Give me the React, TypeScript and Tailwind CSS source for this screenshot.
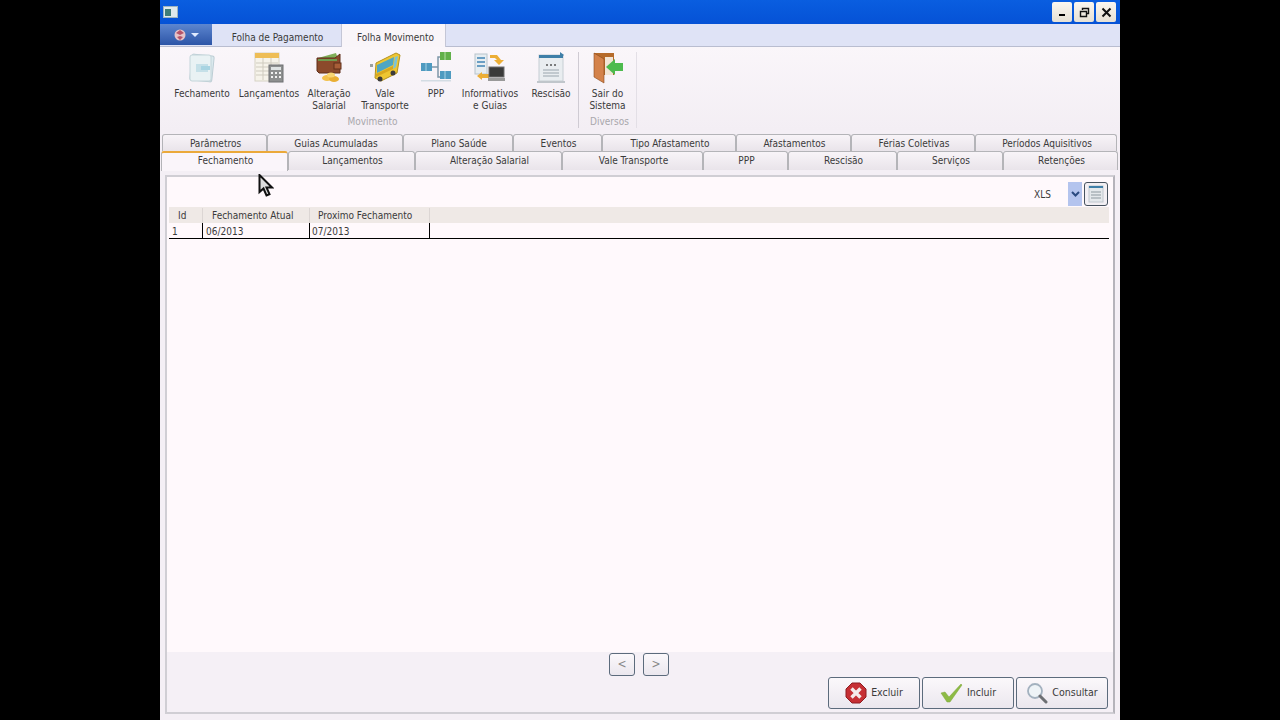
const FONT = { fontFamily: '"DejaVu Sans Condensed", "Noto Sans", sans-serif' };

const topTabs = [
  { label: 'Parâmetros', w: 'w-[105px]' },
  { label: 'Guias Acumuladas', w: 'w-[136px]' },
  { label: 'Plano Saúde', w: 'w-[110px]' },
  { label: 'Eventos', w: 'w-[89px]' },
  { label: 'Tipo Afastamento', w: 'w-[134px]' },
  { label: 'Afastamentos', w: 'w-[115px]' },
  { label: 'Férias Coletivas', w: 'w-[124px]' },
  { label: 'Períodos Aquisitivos', w: 'w-[142px]' },
];

const bottomTabs = [
  { label: 'Lançamentos', w: 'w-[127px] pb-[1px]' },
  { label: 'Alteração Salarial', w: 'w-[147px] pb-[1px]' },
  { label: 'Vale Transporte', w: 'w-[141px] pb-[1px]' },
  { label: 'PPP', w: 'w-[85px] pb-[1px]' },
  { label: 'Rescisão', w: 'w-[109px] pb-[1px]' },
  { label: 'Serviços', w: 'w-[106px] pb-[1px]' },
  { label: 'Retenções', w: 'w-[115px] pb-[1px]' },
];

function FechamentoIcon() {
  return (
    <svg width="32" height="32" viewBox="0 0 32 32">
      <rect x="5" y="3" width="22" height="26" rx="2" fill="#dbe9ee" stroke="#bccdd4" transform="rotate(6 16 16)" />
      <rect x="4" y="3" width="21" height="26" rx="2" fill="#e9f2f4" stroke="#c4d5da" />
      <path d="M10 12h12v8H10z" fill="#c5e0e8" />
      <path d="M15 14h9v4h-9z" fill="#a8d4e2" />
    </svg>
  );
}

function LancamentosIcon() {
  return (
    <svg width="32" height="32" viewBox="0 0 32 32">
      <rect x="2" y="1" width="24" height="28" fill="#f6f3ea" stroke="#d6d2c4" />
      <rect x="2" y="1" width="24" height="5" fill="#eebd56" />
      <path d="M3 11h22M3 15h22M3 19h22M3 23h22M10 6v22M18 6v22" stroke="#cfcbbf" />
      <rect x="16" y="13" width="14" height="17" fill="#8d8f8f" stroke="#6f7173" />
      <rect x="18" y="15" width="10" height="3" fill="#dfe3e3" />
      <path d="M18 20h2v2h-2zM22 20h2v2h-2zM26 20h2v2h-2zM18 24h2v2h-2zM22 24h2v2h-2zM26 24h2v2h-2z" fill="#f2f2f2" />
    </svg>
  );
}

function CarteiraIcon() {
  return (
    <svg width="32" height="32" viewBox="0 0 32 32">
      <path d="M5 6l18-5 2 6H5z" fill="#7fae58" />
      <path d="M4 6h18l5-4v19H6l-2-2z" fill="#8b4a2b" stroke="#5f2f1a" />
      <path d="M5 7h19v2H5z" fill="#6f9c4e" />
      <rect x="21" y="11" width="7" height="6" fill="#a85e38" stroke="#5f2f1a" />
      <ellipse cx="14" cy="26" rx="5" ry="3" fill="#f2c14b" />
      <ellipse cx="21" cy="27" rx="5" ry="3" fill="#e9ae33" />
      <ellipse cx="18" cy="23" rx="4" ry="2.5" fill="#f7d572" />
    </svg>
  );
}

function BusIcon() {
  return (
    <svg width="32" height="32" viewBox="0 0 32 32">
      <path d="M7 11L27 1l4 2-3 18-16 8-6-3z" fill="#eec632" stroke="#b4921e" />
      <path d="M8 13l17-8-1 8-16 8z" fill="#4fa6c4" />
      <path d="M26 5l3-1-2 11-3 2z" fill="#7bc3d8" />
      <path d="M7 22l17-8v3L7 25z" fill="#d9a81f" />
      <circle cx="11" cy="27" r="2.5" fill="#3c3c3c" />
      <circle cx="24" cy="21" r="2.5" fill="#3c3c3c" />
      <rect x="1" y="12" width="3" height="3" fill="#9aa0a0" />
    </svg>
  );
}

function PppIcon() {
  return (
    <svg width="32" height="32" viewBox="0 0 32 32">
      <path d="M12 15h6V5h3M18 15v10h3" stroke="#7d97a8" strokeWidth="1.5" fill="none" />
      <rect x="1" y="11" width="11" height="8" fill="#4e9ac0" />
      <path d="M6 11v8" stroke="#a7d2e4" />
      <rect x="20" y="0" width="11" height="8" fill="#61b04a" />
      <path d="M25 0v8" stroke="#b5dda6" />
      <rect x="20" y="19" width="11" height="8" fill="#4e9ac0" />
      <path d="M25 19v8" stroke="#a7d2e4" />
      <rect x="1" y="28" width="30" height="1.5" fill="#d3dce3" />
    </svg>
  );
}

function InformativosIcon() {
  return (
    <svg width="32" height="32" viewBox="0 0 32 32">
      <rect x="1" y="2" width="12" height="20" fill="#e7edf1" stroke="#b8c4cc" />
      <path d="M3 6h8M3 10h8M3 14h8" stroke="#6a9ec4" strokeWidth="2" />
      <path d="M16 3h7l4 5h3l-5 5-5-5h3l-2-2h-5z" fill="#ecae36" />
      <path d="M3 24l5-4v2h7v4H8v2z" fill="#ecae36" />
      <rect x="15" y="15" width="15" height="10" fill="#3a3a3a" stroke="#6f6f6f" />
      <rect x="14" y="26" width="17" height="3" fill="#999" />
    </svg>
  );
}

function RescisaoIcon() {
  return (
    <svg width="32" height="32" viewBox="0 0 32 32">
      <rect x="4" y="3" width="24" height="26" fill="#e9edf0" stroke="#c6ced4" />
      <path d="M4 3h24v3H4z" fill="#3f7fa8" />
      <path d="M25 0l4 3-4 3z" fill="#3f7fa8" />
      <path d="M11 13h2M15 13h2M19 13h2" stroke="#555" strokeWidth="1.5" />
      <path d="M8 18h16M8 21h16M8 24h16" stroke="#9aa5ad" />
      <rect x="2" y="29" width="28" height="2" fill="#c0c6cb" />
    </svg>
  );
}

function SairIcon() {
  return (
    <svg width="32" height="32" viewBox="0 0 32 32">
      <path d="M2 1h20v22H2z" fill="#b66b2b" />
      <path d="M2 1l10 6v24L2 25z" fill="#d4824a" stroke="#8a4a1c" strokeWidth="0.6" />
      <path d="M13 5h8v18h-8z" fill="#f2e5d5" />
      <path d="M14 15l9-8v4h8v8h-8v4z" fill="#4dbb4e" />
    </svg>
  );
}

function RibbonButton({ label, width, icon }: { label: string[]; width: string; icon: React.ReactNode }) {
  return (
    <div className={`${width} shrink-0 flex flex-col items-center text-[10px] leading-[12px] text-[#3a3a3a] whitespace-nowrap`}>
      <div className="h-[32px] mb-[4px] flex items-center justify-center">{icon}</div>
      {label.map(l => <div key={l}>{l}</div>)}
    </div>
  );
}

function Tab({ label, w }: { label: string; w: string }) {
  return (
    <div className={`${w} shrink-0 h-full pl-[2px] flex items-center justify-center rounded-t-[3px] border border-b-0 border-[#b4b4b8] bg-gradient-to-b from-[#f8f4f8] to-[#e9e4ea] text-[10px] text-[#3a3a3a]`}>
      {label}
    </div>
  );
}

function FooterButton({ label, icon, w }: { label: string; icon: React.ReactNode; w: string }) {
  return (
    <div className={`${w} h-[32px] flex items-center justify-center gap-[4px] rounded-[3px] border border-[#5c6b7c] bg-gradient-to-b from-[#fbf8fb] to-[#ebe7ee] text-[10.5px] text-[#3a3a3a]`}>
      {icon}
      {label}
    </div>
  );
}

export default function App() {
  return (
    <div className="relative w-full h-screen bg-black flex justify-center overflow-hidden" style={FONT}>
      <div className="w-[960px] h-[720px] flex flex-col bg-[#f4eff5]">
        {/* title bar */}
        <div className="h-[24px] shrink-0 flex items-center justify-between pl-[2px] pr-[4px] bg-gradient-to-b from-[#0a5ee0] to-[#0552d6]">
          <div className="w-[15px] h-[12px] ml-[1px] bg-[#dfe9ec] border border-[#9db4c0] flex items-center">
            <div className="w-[6px] h-[7px] ml-[1px] bg-[#3f7d78]" />
          </div>
          <div className="flex gap-[2px]">
            {['min', 'max', 'close'].map(k => (
              <div key={k} className="w-[20px] h-[20px] rounded-[2px] bg-gradient-to-b from-[#fbf7f0] to-[#e6e0d4] flex items-center justify-center">
                {k === 'min' && <div className="w-[6px] h-[2px] mt-[5px] bg-black" />}
                {k === 'max' && (
                  <svg width="11" height="11" viewBox="0 0 11 11" fill="none" stroke="#111">
                    <path d="M3.5 3V1.5h6v5H8" strokeWidth="1.4" />
                    <path d="M1.5 4.5h6v5h-6z" strokeWidth="1.4" />
                  </svg>
                )}
                {k === 'close' && (
                  <svg width="11" height="11" viewBox="0 0 11 11" stroke="#111" strokeWidth="2">
                    <path d="M1.5 1.5l8 8M9.5 1.5l-8 8" />
                  </svg>
                )}
              </div>
            ))}
          </div>
        </div>

        {/* menu tabs */}
        <div className="h-[23px] shrink-0 flex items-end bg-[#dfe3f6] border-b border-[#b9bdd0]">
          <div className="w-[52px] h-[21px] mb-[1px] flex items-center justify-center gap-[4px] bg-gradient-to-b from-[#5d86cf] to-[#2d55a7]">
            <svg width="14" height="14" viewBox="0 0 14 14">
              <circle cx="7" cy="7" r="5.5" fill="#e6c3c8" />
              <path d="M3 5l4-3 4 3-4 2zM4 9l3-1 3 1-3 3z" fill="#b5546a" />
            </svg>
            <div className="w-0 h-0 border-x-[4px] border-x-transparent border-t-[4px] border-t-[#dfeaff]" />
          </div>
          <div className="w-[129px] h-full pl-[2px] pt-[4px] flex items-center justify-center text-[10px] text-[#3a3a3a]">Folha de Pagamento</div>
          <div className="w-[105px] h-[23px] -mb-[1px] pt-[3px] pl-[4px] flex items-center justify-center bg-[#f9f5f9] border-x border-[#c4c6d6] text-[10px] text-[#3a3a3a]">Folha Movimento</div>
        </div>

        {/* ribbon */}
        <div className="h-[83px] shrink-0 flex pt-[5px] bg-gradient-to-b from-[#faf6fa] to-[#f3eef4]">
          <div className="flex flex-col w-[419px] h-[76px] border-r border-[#cfcbd3]">
            <div className="flex h-[64px] pl-[10px]">
              <RibbonButton label={['Fechamento']} width="w-[64px]" icon={<FechamentoIcon />} />
              <RibbonButton label={['Lançamentos']} width="w-[70px]" icon={<LancamentosIcon />} />
              <RibbonButton label={['Alteração', 'Salarial']} width="w-[50px]" icon={<CarteiraIcon />} />
              <RibbonButton label={['Vale', 'Transporte']} width="w-[62px]" icon={<BusIcon />} />
              <RibbonButton label={['PPP']} width="w-[40px]" icon={<PppIcon />} />
              <RibbonButton label={['Informativos', 'e Guias']} width="w-[68px]" icon={<InformativosIcon />} />
              <RibbonButton label={['Rescisão']} width="w-[54px]" icon={<RescisaoIcon />} />
            </div>
            <div className="text-center text-[10px] leading-[12px] pl-[7px] text-[#a9a7ac]">Movimento</div>
          </div>
          <div className="flex flex-col w-[58px] h-[76px] border-r border-[#e3dfe6]">
            <div className="flex justify-center h-[64px]">
              <RibbonButton label={['Sair do', 'Sistema']} width="w-[58px]" icon={<SairIcon />} />
            </div>
            <div className="text-center text-[10px] leading-[12px] pl-[4px] text-[#a9a7ac]">Diversos</div>
          </div>
        </div>

        {/* tabs */}
        <div className="flex shrink-0 h-[17px] mt-[4px] pl-[2px]">
          {topTabs.map(t => <Tab key={t.label} label={t.label} w={t.w} />)}
        </div>
        <div className="flex shrink-0 h-[19px] pl-[1px]">
          <div className="w-[127px] h-[20px] z-10 pl-[2px] pb-[3px] flex items-center justify-center rounded-t-[3px] border-t-2 border-x border-t-[#eba93a] border-x-[#b4b4b8] bg-[#faf5fa] text-[10px] text-[#3a3a3a]">Fechamento</div>
          {bottomTabs.map(t => <Tab key={t.label} label={t.label} w={t.w} />)}
        </div>

        {/* panel */}
        <div className="h-[539px] shrink-0 mx-[5px] mt-[5px] flex flex-col border-2 border-[#d0ced4] border-r-[#b5b3ba] bg-[#f5f0f6]">
          <div className="h-[475px] shrink-0 bg-[#fff9fc] pl-[2px] pr-[4px]">
            <div className="h-[30px] flex items-center justify-end pt-[4px] pr-[1px] text-[10px] text-[#3a3a3a]">
              <span className="mr-[17px]">XLS</span>
              <div className="w-[14px] h-[24px] mr-[2px] flex items-center justify-center bg-[#b4c4ee]">
                <svg width="9" height="6" viewBox="0 0 9 6" fill="none" stroke="#2a4a80" strokeWidth="2"><path d="M1 1l3.5 3.5L8 1" /></svg>
              </div>
              <div className="w-[24px] h-[24px] rounded-[3px] border border-[#46525e] bg-[#f2eff3] flex items-center justify-center">
                <svg width="16" height="18" viewBox="0 0 16 18">
                  <rect x="1" y="1" width="14" height="16" fill="#e4e8eb" stroke="#c0c8ce" />
                  <path d="M1 1h14v2H1z" fill="#3f7fa8" />
                  <path d="M3 7h10M3 10h10M3 13h10" stroke="#8d989f" />
                </svg>
              </div>
            </div>
            <div className="h-[16px] flex items-center bg-[#efe9e6] text-[10px] text-[#3a3a3a]">
              <div className="w-[34px] pl-[9px] border-r border-[#dcd6d4]">Id</div>
              <div className="w-[107px] pl-[9px] border-r border-[#dcd6d4]">Fechamento Atual</div>
              <div className="w-[120px] pl-[8px] border-r border-[#dcd6d4]">Proximo Fechamento</div>
            </div>
            <div className="h-[16px] flex items-center border-b border-black text-[10px] text-[#3a3a3a]">
              <div className="w-[34px] h-full pl-[3px] pt-[1px] border-r border-black leading-[16px]">1</div>
              <div className="w-[107px] h-full pl-[3px] pt-[1px] border-r border-black leading-[16px]">06/2013</div>
              <div className="w-[120px] h-full pl-[2px] pt-[1px] border-r border-black leading-[16px]">07/2013</div>
            </div>
          </div>

          <div className="flex shrink-0 justify-center gap-[8px] h-[24px] items-center pr-[2px]">
            {['<', '>'].map(c => (
              <div key={c} className="w-[26px] h-[23px] rounded-[3px] border border-[#5c6b7c] bg-gradient-to-b from-[#fbf8fb] to-[#ebe7ee] flex items-center justify-center text-[12px] text-[#888]">{c}</div>
            ))}
          </div>
          <div className="flex shrink-0 justify-end gap-[2px] mt-[1px] pr-[5px]">
            <FooterButton
              label="Excluir"
              w="w-[92px]"
              icon={
                <svg width="22" height="22" viewBox="0 0 22 22">
                  <path d="M7 1h8l6 6v8l-6 6H7l-6-6V7z" fill="#c62f34" stroke="#8e1d22" />
                  <path d="M6.5 6.5l9 9M15.5 6.5l-9 9" stroke="#f4eaea" strokeWidth="3.4" />
                </svg>
              }
            />
            <FooterButton
              label="Incluir"
              w="w-[92px]"
              icon={
                <svg width="23" height="20" viewBox="0 0 23 20">
                  <path d="M1 10l4-1 4 5L21 1l1 1L10 19H7z" fill="#8dbb45" stroke="#7da53a" strokeWidth="0.5" />
                </svg>
              }
            />
            <FooterButton
              label="Consultar"
              w="w-[92px]"
              icon={
                <svg width="22" height="22" viewBox="0 0 22 22" fill="none">
                  <circle cx="9" cy="9" r="7" fill="#eef3f7" stroke="#a3b1bf" strokeWidth="1.8" />
                  <path d="M14 14l6 6" stroke="#6d6f73" strokeWidth="3" strokeLinecap="round" />
                </svg>
              }
            />
          </div>
        </div>
      </div>

      {/* mouse cursor */}
      <svg className="absolute left-[258px] top-[174px]" width="16" height="24" viewBox="0 0 16 24">
        <path d="M1.5 1v17l4-3.5 3 7 3-1.3-3-6.7h5.5z" fill="#ddd" stroke="#111" strokeWidth="2" />
      </svg>
    </div>
  );
}
